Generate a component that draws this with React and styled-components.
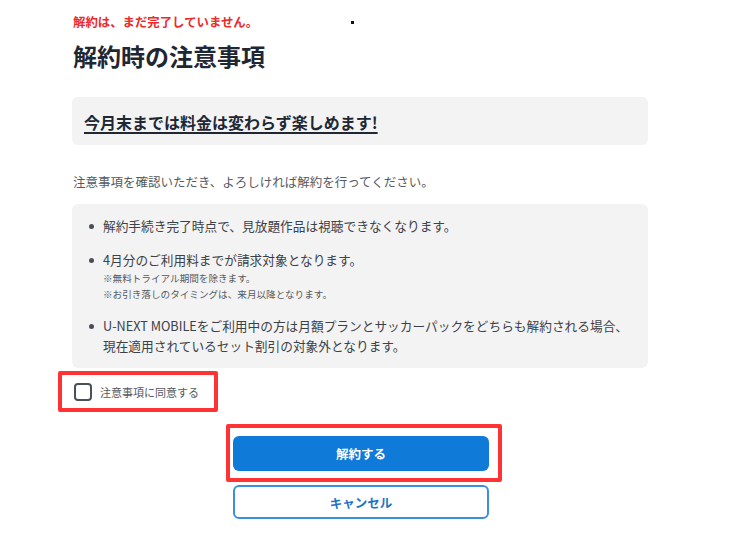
import React, { useState } from "react";
import styled, { createGlobalStyle } from "styled-components";

const GlobalStyle = createGlobalStyle`
  body {
    margin: 0;
    background: #ffffff;
    font-family: "Noto Sans CJK JP", "Noto Sans", sans-serif;
  }
`;

function App() {
  const [agreed, setAgreed] = useState(false);

  return (
    <Page>
      <GlobalStyle />
      <Dot />
      <Notice>解約は、まだ完了していません。</Notice>
      <Title>解約時の注意事項</Title>
      <Highlight>
        <HighlightText>今月末までは料金は変わらず楽しめます!</HighlightText>
      </Highlight>
      <Lead>注意事項を確認いただき、よろしければ解約を行ってください。</Lead>
      <NoteBox>
        <NoteItem>解約手続き完了時点で、見放題作品は視聴できなくなります。</NoteItem>
        <NoteItem>
          4月分のご利用料までが請求対象となります。
          <SubNote>※無料トライアル期間を除きます。</SubNote>
          <SubNote>※お引き落しのタイミングは、来月以降となります。</SubNote>
        </NoteItem>
        <NoteItem>
          U-NEXT MOBILEをご利用中の方は月額プランとサッカーパックをどちらも解約される場合、現在適用されているセット割引の対象外となります。
        </NoteItem>
      </NoteBox>
      <Marked>
        <CheckLabel>
          <CheckBox
            type="checkbox"
            checked={agreed}
            onChange={(e) => setAgreed(e.target.checked)}
          />
          注意事項に同意する
        </CheckLabel>
      </Marked>
      <Actions>
        <MarkedButton>
          <Button primary>解約する</Button>
        </MarkedButton>
        <Button>キャンセル</Button>
      </Actions>
    </Page>
  );
}

const Page = styled.div`
  position: relative;
  width: 576px;
  padding: 14px 0 16px 72px;
  color: #1f2733;
`;

const Dot = styled.span`
  position: absolute;
  left: 351px;
  top: 21px;
  width: 3px;
  height: 3px;
  background: #111;
`;

const Notice = styled.p`
  margin: 0 0 0 1px;
  font-size: 12.4px;
  line-height: 17px;
  font-weight: 700;
  color: #ee2a2a;
`;

const Title = styled.h1`
  margin: 8px 0 0 1px;
  font-size: 24px;
  line-height: 34px;
  font-weight: 700;
  color: #1f2733;
`;

const Highlight = styled.div`
  margin-top: 24px;
  height: 48px;
  display: flex;
  align-items: center;
  padding: 0 12px;
  background: #f3f3f3;
  border-radius: 6px;
`;

const HighlightText = styled.span`
  margin-top: 2px;
  font-size: 16px;
  line-height: 20px;
  font-weight: 700;
  color: #1f2733;
  text-decoration: underline;
  text-decoration-thickness: 1.5px;
  text-underline-offset: 3px;
`;

const Lead = styled.p`
  margin: 28px 0 0 1px;
  font-size: 12.5px;
  line-height: 18px;
  color: #555a60;
`;

const NoteBox = styled.ul`
  margin: 13px 0 0;
  padding: 12px 20px 12px 31px;
  list-style: none;
  background: #f3f3f3;
  border-radius: 6px;
  display: flex;
  flex-direction: column;
  gap: 14px;
`;

const NoteItem = styled.li`
  position: relative;
  font-size: 12.7px;
  line-height: 20px;
  color: #3c4148;

  &::before {
    content: "";
    position: absolute;
    left: -14px;
    top: 8px;
    width: 5px;
    height: 5px;
    border-radius: 50%;
    background: #4a4f55;
  }
`;

const SubNote = styled.span`
  display: block;
  font-size: 9.6px;
  line-height: 16px;
  color: #555a60;
`;

const Marked = styled.div`
  margin: 3px 0 0 -14px;
  width: 160px;
  height: 41px;
  box-sizing: border-box;
  border: 4px solid #ff3333;
  border-radius: 2px;
  display: flex;
  align-items: center;
  padding-left: 12px;
`;

const CheckLabel = styled.label`
  display: flex;
  align-items: center;
  gap: 8px;
  font-size: 11px;
  color: #555a60;
  cursor: pointer;
`;

const CheckBox = styled.input`
  appearance: none;
  margin: 0;
  width: 18px;
  height: 18px;
  box-sizing: border-box;
  border: 2px solid #4a5059;
  border-radius: 4px;
  background: #ffffff;
  cursor: pointer;

  &:checked {
    background: #0f7ad8;
    border-color: #0f7ad8;
  }
`;

const Actions = styled.div`
  margin: 12px 0 0 154px;
  width: 276px;
  display: flex;
  flex-direction: column;
  align-items: flex-start;
  gap: 3px;

  & > button {
    margin-left: 7px;
  }
`;

const MarkedButton = styled.div`
  width: 276px;
  height: 58px;
  box-sizing: border-box;
  border: 4px solid #ff3333;
  border-radius: 2px;
  display: flex;
  align-items: center;
  padding-left: 3px;
`;

const Button = styled.button`
  width: 256px;
  height: ${(p) => (p.primary ? "35px" : "34px")};
  border-radius: 6px;
  border: ${(p) => (p.primary ? "none" : "2px solid #3b8fe0")};
  background: ${(p) => (p.primary ? "#0f7ad8" : "#ffffff")};
  color: ${(p) => (p.primary ? "#ffffff" : "#1f73c6")};
  font-family: "Noto Sans CJK JP", "Noto Sans", sans-serif;
  font-size: 12.5px;
  font-weight: 700;
  cursor: pointer;
`;

export default App;
